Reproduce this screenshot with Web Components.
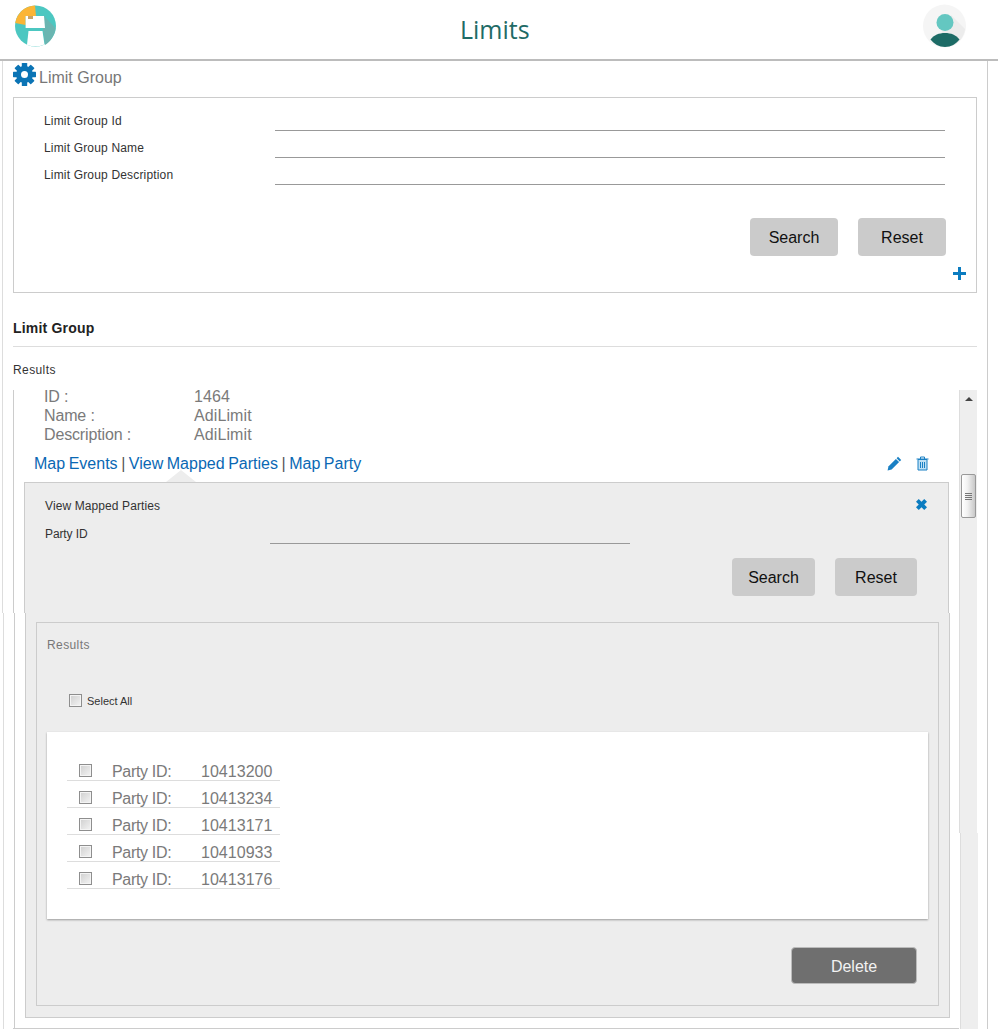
<!DOCTYPE html>
<html>
<head>
<meta charset="utf-8">
<title>Limits</title>
<style>
  html, body { margin: 0; background: #fff; }
  body { font-family: "Liberation Sans", Arial, sans-serif; height: 1036px; overflow: hidden; }
</style>
</head>
<body>
<app-header>Limits</app-header>
<limits-page></limits-page>

<script>
// small base so every element only has to give its markup
class Base extends HTMLElement {
  connectedCallback() {
    this.attachShadow({ mode: "open" });
    this.shadowRoot.innerHTML = this.render();
  }
}

class AppHeader extends Base {
  render() {
    return `
      <style>
        :host { display: flex; align-items: center; justify-content: space-between; height: 61px; box-sizing: border-box;
          border-bottom: 2px solid #bcbcbc; padding: 0 31px 7px 14px; position: relative; }
        h1 { margin: 0; font: 400 25px "Open Sans", sans-serif; color: #1e6b66; position: absolute; left: 460px; top: 11px; line-height: 36px; }
        svg { display: block; }
      </style>
      <svg width="44" height="44" viewBox="0 0 44 44">
        <circle cx="21.5" cy="22" r="20.5" fill="#4cc7c1"/>
        <path d="M30 12 L41.500 24 C40.500 32 36 38 31 41 L29 25 Z" fill="#6ab5b1"/>
        <path d="M21 1.500 C11 1.800 3 9 1.200 19 L11.600 21 L11.600 12 L22 12 Z" fill="#fbb535"/>
        <path d="M11.600 12 H30 L31 24 H11.600 Z" fill="#fff"/>
        <rect x="14" y="12" width="5" height="3" fill="#c9a364"/>
        <path d="M14.500 27 H28.500 L30.500 40.500 C27.500 41.800 24.500 42.300 21.500 42.300 C18.500 42.300 15.500 41.800 13 40.700 Z" fill="#fff"/>
      </svg>
      <h1><slot></slot></h1>
      <svg width="44" height="44" viewBox="0 0 44 44">
        <circle cx="21.500" cy="22" r="21.500" fill="#f5f5f5"/>
        <path d="M28 11 L42 25 C41 34 34 41 28 42 L18 30 Z" fill="#ececec"/>
        <circle cx="22" cy="18.500" r="8.500" fill="#64c7c1"/>
        <path d="M7.500 35.500 C11 31 16 29 22 29 C28 29 33 31 36.500 35.500 C33 40 28 43 22 43 C16 43 11 40 7.500 35.500 Z" fill="#1d6b66"/>
      </svg>
    `;
  }
}

class UiButton extends Base {
  render() {
    return `
      <style>
        :host { display: block; }
        button { display: block; width: var(--w, 88px); height: var(--h, 38px); border: 0; border-radius: 4px; background: #cbcbcb;
          font: 16px "Liberation Sans", sans-serif; color: #111; padding: 2px 0 0; }
        :host([dark]) button { background: #6f6f6f; color: #f2f2f2; border: 1px solid #bbb; }
      </style>
      <button><slot></slot></button>
    `;
  }
}

class TextField extends Base {
  render() {
    return `
      <style>
        :host { display: flex; align-items: flex-end; height: 27px; font-size: 12px; color: #333; }
        label { width: var(--label, 231px); flex: none; line-height: 14px; padding-bottom: 3px; letter-spacing: var(--ls, .17px); }
        input { flex: var(--grow, 1); width: var(--input, auto); min-width: 0; height: 20px; box-sizing: border-box; border: 0;
          border-bottom: 1px solid #999; background: transparent; padding: 0; outline: 0; }
      </style>
      <label><slot></slot></label><input type="text">
    `;
  }
}

class CheckBox extends Base {
  render() {
    return `
      <style>
        :host { display: block; width: 13px; height: 13px; }
        input { appearance: none; display: block; margin: 0; width: 13px; height: 13px; box-sizing: border-box;
          border: 1px solid #8e8e8e; box-shadow: inset 0 0 0 1px #f4f4f4; background: linear-gradient(135deg, #cfcfcf, #f4f4f4); }
      </style>
      <input type="checkbox">
    `;
  }
}

class IconButton extends Base {
  render() {
    const icons = {
      plus: `<svg width="13" height="13" viewBox="0 0 13 13"><path d="M5 0h3v5h5v3H8v5H5V8H0V5h5z" fill="#0b7cc0"/></svg>`,
      close: `<svg width="11" height="11" viewBox="0 0 12 12"><path d="M0 3 3 0 6 3 9 0 12 3 9 6 12 9 9 12 6 9 3 12 0 9 3 6z" fill="#0b7cc0"/></svg>`,
      pencil: `<svg width="15" height="15" viewBox="0 0 15 15"><path d="M11 .8 14.200 4 12.800 5.400 9.600 2.200z" fill="#1a80c4"/><path d="M8.900 2.900 12.100 6.100 4.600 13.600.6 14.600 1.400 10.400z" fill="#1a80c4"/></svg>`,
      trash: `<svg width="13" height="15" viewBox="0 0 13 15"><path d="M.5 3h12M4.500 3V1h4v2" fill="none" stroke="#1a80c4"/><path d="M2 3.500h9V14H2z" fill="#bfe0f4" stroke="#1a80c4"/><path d="M4.500 6v6M6.500 6v6M8.500 6v6" stroke="#1a80c4"/></svg>`
    };
    return `<style>:host { display: block; line-height: 0; }</style>${icons[this.getAttribute("name")]}`;
  }
}

class PartyRow extends Base {
  render() {
    return `
      <style>
        :host { display: flex; width: 213px; height: 27px; box-sizing: border-box; margin-left: 20px; padding: 9px 0 0 12px;
          border-bottom: 1px solid #ddd; font-size: 16px; line-height: 17px; color: #7a7a7a; letter-spacing: .03px; }
        check-box { margin: 1px 20px 0 0; }
        span { width: 89px; letter-spacing: -.33px; }
      </style>
      <check-box></check-box><span>Party ID:</span><slot></slot>
    `;
  }
}

class MappedResults extends Base {
  render() {
    return `
      <style>
        :host { display: block; margin: 9px 10px 11px 10px; border: 1px solid #ccc; padding: 15px 10px 21px 10px; }
        .title { font-size: 12px; line-height: 14px; color: #777; letter-spacing: .4px; }
        .all { display: flex; margin: 42px 0 25px 22px; font-size: 11px; line-height: 15px; color: #333; gap: 5px; height: 13px; }
        .list { background: #fff; padding: 22px 0 30px; box-shadow: 0 1px 2px #999; margin-bottom: 28px; }
        .actions { display: flex; justify-content: flex-end; padding-right: 11px; }
        ui-button { --w: 126px; --h: 37px; }
      </style>
      <div class="title">Results</div>
      <div class="all"><check-box></check-box>Select All</div>
      <div class="list">
        <party-row>10413200</party-row>
        <party-row>10413234</party-row>
        <party-row>10413171</party-row>
        <party-row>10410933</party-row>
        <party-row>10413176</party-row>
      </div>
      <div class="actions"><ui-button dark>Delete</ui-button></div>
    `;
  }
}

class MappedParties extends Base {
  render() {
    return `
      <style>
        :host { display: block; color: #333; }
        .top, .bottom { box-sizing: border-box; width: 925px; background: #ededed; border: 1px solid #ccc; }
        .top { position: relative; height: 131px; margin-left: 10px; border-bottom: 0; padding-top: 16px; }
        .bottom { margin-left: 11px; border-top: 0; overflow: hidden; }
        .notch { position: absolute; left: 141px; top: -13px; width: 0; height: 0; border: solid transparent; border-width: 0 15px 12px; border-bottom-color: #ededed; }
        .title { font-size: 12px; line-height: 14px; padding-left: 20px; letter-spacing: .1px; }
        text-field { margin: 4px 0 0 20px; --label: 225px; --grow: none; --input: 360px; --ls: -.1px; }
        .close { position: absolute; right: 21px; top: 16px; }
        .actions { display: flex; justify-content: flex-end; gap: 20px; margin-top: 14px; padding-right: 31px; }
        .actions ui-button:first-child { --w: 83px; }
        .actions ui-button:last-child { --w: 82px; }
      </style>
      <div class="top">
        <div class="notch"></div>
        <div class="title">View Mapped Parties</div>
        <icon-button class="close" name="close"></icon-button>
        <text-field>Party ID</text-field>
        <div class="actions"><ui-button>Search</ui-button><ui-button>Reset</ui-button></div>
      </div>
      <div class="bottom"><mapped-results></mapped-results></div>
    `;
  }
}

class ResultItem extends Base {
  render() {
    return `
      <style>
        :host { display: block; flex: 1; min-width: 0; margin-top: -3px; }
        dl { margin: 0 0 8px 30px; display: grid; grid-template-columns: 150px 1fr; font-size: 16px; line-height: 19px; color: #7a7a7a; }
        dt { letter-spacing: -.15px; }
        dd { margin: 0; letter-spacing: .1px; }
        .links { display: flex; justify-content: space-between; align-items: center; height: 22px; margin-bottom: 8px; padding: 0 30px 0 20px; font-size: 16px; color: #555; }
        .links > span:first-child { padding-top: 2px; word-spacing: -.9px; }
        a { color: #0a68b4; text-decoration: none; }
        .tools { display: flex; gap: 14px; }
      </style>
      <dl>
        <dt>ID :</dt><dd>1464</dd>
        <dt>Name :</dt><dd>AdiLimit</dd>
        <dt>Description :</dt><dd>AdiLimit</dd>
      </dl>
      <div class="links">
        <span><a href="#">Map Events</a> | <a href="#">View Mapped Parties</a> | <a href="#">Map Party</a></span>
        <span class="tools"><icon-button name="pencil"></icon-button><icon-button name="trash"></icon-button></span>
      </div>
      <mapped-parties></mapped-parties>
    `;
  }
}

class ScrollBar extends Base {
  render() {
    return `
      <style>
        :host { display: flex; flex-direction: column; width: 18px; flex: none; }
        .track { box-sizing: border-box; width: 18px; background: #eee; border-left: 1px solid #ddd; }
        .upper { display: flex; flex-direction: column; height: 443px; }
        .lower { flex: 1; margin-left: 1px; }
        .up { width: 0; height: 0; margin: 7px 0 0 5px; border: solid transparent; border-width: 0 4px 4px; border-bottom-color: #444; }
        .thumb { display: flex; flex-direction: column; justify-content: center; gap: 1px; align-items: center; width: 15px; height: 44px; box-sizing: border-box; margin: 73px 0 0 1px;
          border: 1px solid #999; border-radius: 2px; background: linear-gradient(90deg, #fff, #f2f2f2 40%, #c8c8c8); }
        .thumb i { display: block; width: 7px; height: 1px; background: #777; }
      </style>
      <div class="track upper">
        <div class="up"></div>
        <div class="thumb"><i></i><i></i><i></i><i></i></div>
      </div>
      <div class="track lower"></div>
    `;
  }
}

class GearIcon extends Base {
  render() {
    const teeth = [0, 45, 90, 135].map(a => `<rect x="8.800" y="0" width="5.400" height="23" rx=".6" transform="rotate(${a} 11.500 11.500)"/>`).join("");
    return `
      <style>:host { display: block; line-height: 0; }</style>
      <svg width="23" height="23" viewBox="0 0 23 23" fill="#0b74b5">${teeth}
        <circle cx="11.500" cy="11.500" r="8.400"/><circle cx="11.500" cy="11.500" r="3.500" fill="#fff"/>
      </svg>
    `;
  }
}

class LimitsPage extends Base {
  render() {
    return `
      <style>
        :host { display: block; height: 968px; box-sizing: border-box; margin-left: 2px; width: 986px; border-right: 1px solid #ccc; padding: 2px 10px 0 11px; color: #333;
          background: linear-gradient(#ddd, #ddd) 0 0 / 1px 552px no-repeat, linear-gradient(#ddd, #ddd) 1px 552px / 1px 100% no-repeat; }
        .head { display: flex; align-items: center; gap: 3px; height: 23px; font-size: 16px; color: #777; }
        .head span { margin-top: 7px; }
        .search { border: 1px solid #ccc; margin-top: 11px; padding: 6px 0 12px 30px; }
        .search .actions { display: flex; justify-content: flex-end; gap: 20px; margin: 33px 30px 0 0; }
        .search text-field { margin-right: 31px; }
        .plus { display: flex; justify-content: flex-end; margin-top: 11px; padding-right: 10px; }
        h2 { margin: 27px 0 0; padding-bottom: 10px; font-size: 14px; line-height: 16px; color: #222; border-bottom: 1px solid #ddd; letter-spacing: .2px; }
        .results { margin: 16px 0 13px; font-size: 12px; line-height: 14px; letter-spacing: .4px; }
        .area { display: flex; height: 639px; }
        .main { flex: 1; min-width: 0; box-sizing: border-box; display: flex; padding-left: 1px; border-bottom: 1px solid #ccc;
          background: linear-gradient(#ccc, #ccc) 0 0 / 1px 223px no-repeat, linear-gradient(#ccc, #ccc) 1px 223px / 1px 100% no-repeat; }
      </style>
      <div class="head"><gear-icon></gear-icon><span>Limit Group</span></div>
      <section class="search">
        <text-field>Limit Group Id</text-field>
        <text-field>Limit Group Name</text-field>
        <text-field>Limit Group Description</text-field>
        <div class="actions"><ui-button>Search</ui-button><ui-button>Reset</ui-button></div>
        <div class="plus"><icon-button name="plus"></icon-button></div>
      </section>
      <h2>Limit Group</h2>
      <div class="results">Results</div>
      <div class="area">
        <div class="main"><result-item></result-item></div>
        <scroll-bar></scroll-bar>
      </div>
    `;
  }
}

customElements.define("app-header", AppHeader);
customElements.define("ui-button", UiButton);
customElements.define("text-field", TextField);
customElements.define("check-box", CheckBox);
customElements.define("icon-button", IconButton);
customElements.define("party-row", PartyRow);
customElements.define("mapped-results", MappedResults);
customElements.define("mapped-parties", MappedParties);
customElements.define("result-item", ResultItem);
customElements.define("scroll-bar", ScrollBar);
customElements.define("gear-icon", GearIcon);
customElements.define("limits-page", LimitsPage);
</script>
</body>
</html>
